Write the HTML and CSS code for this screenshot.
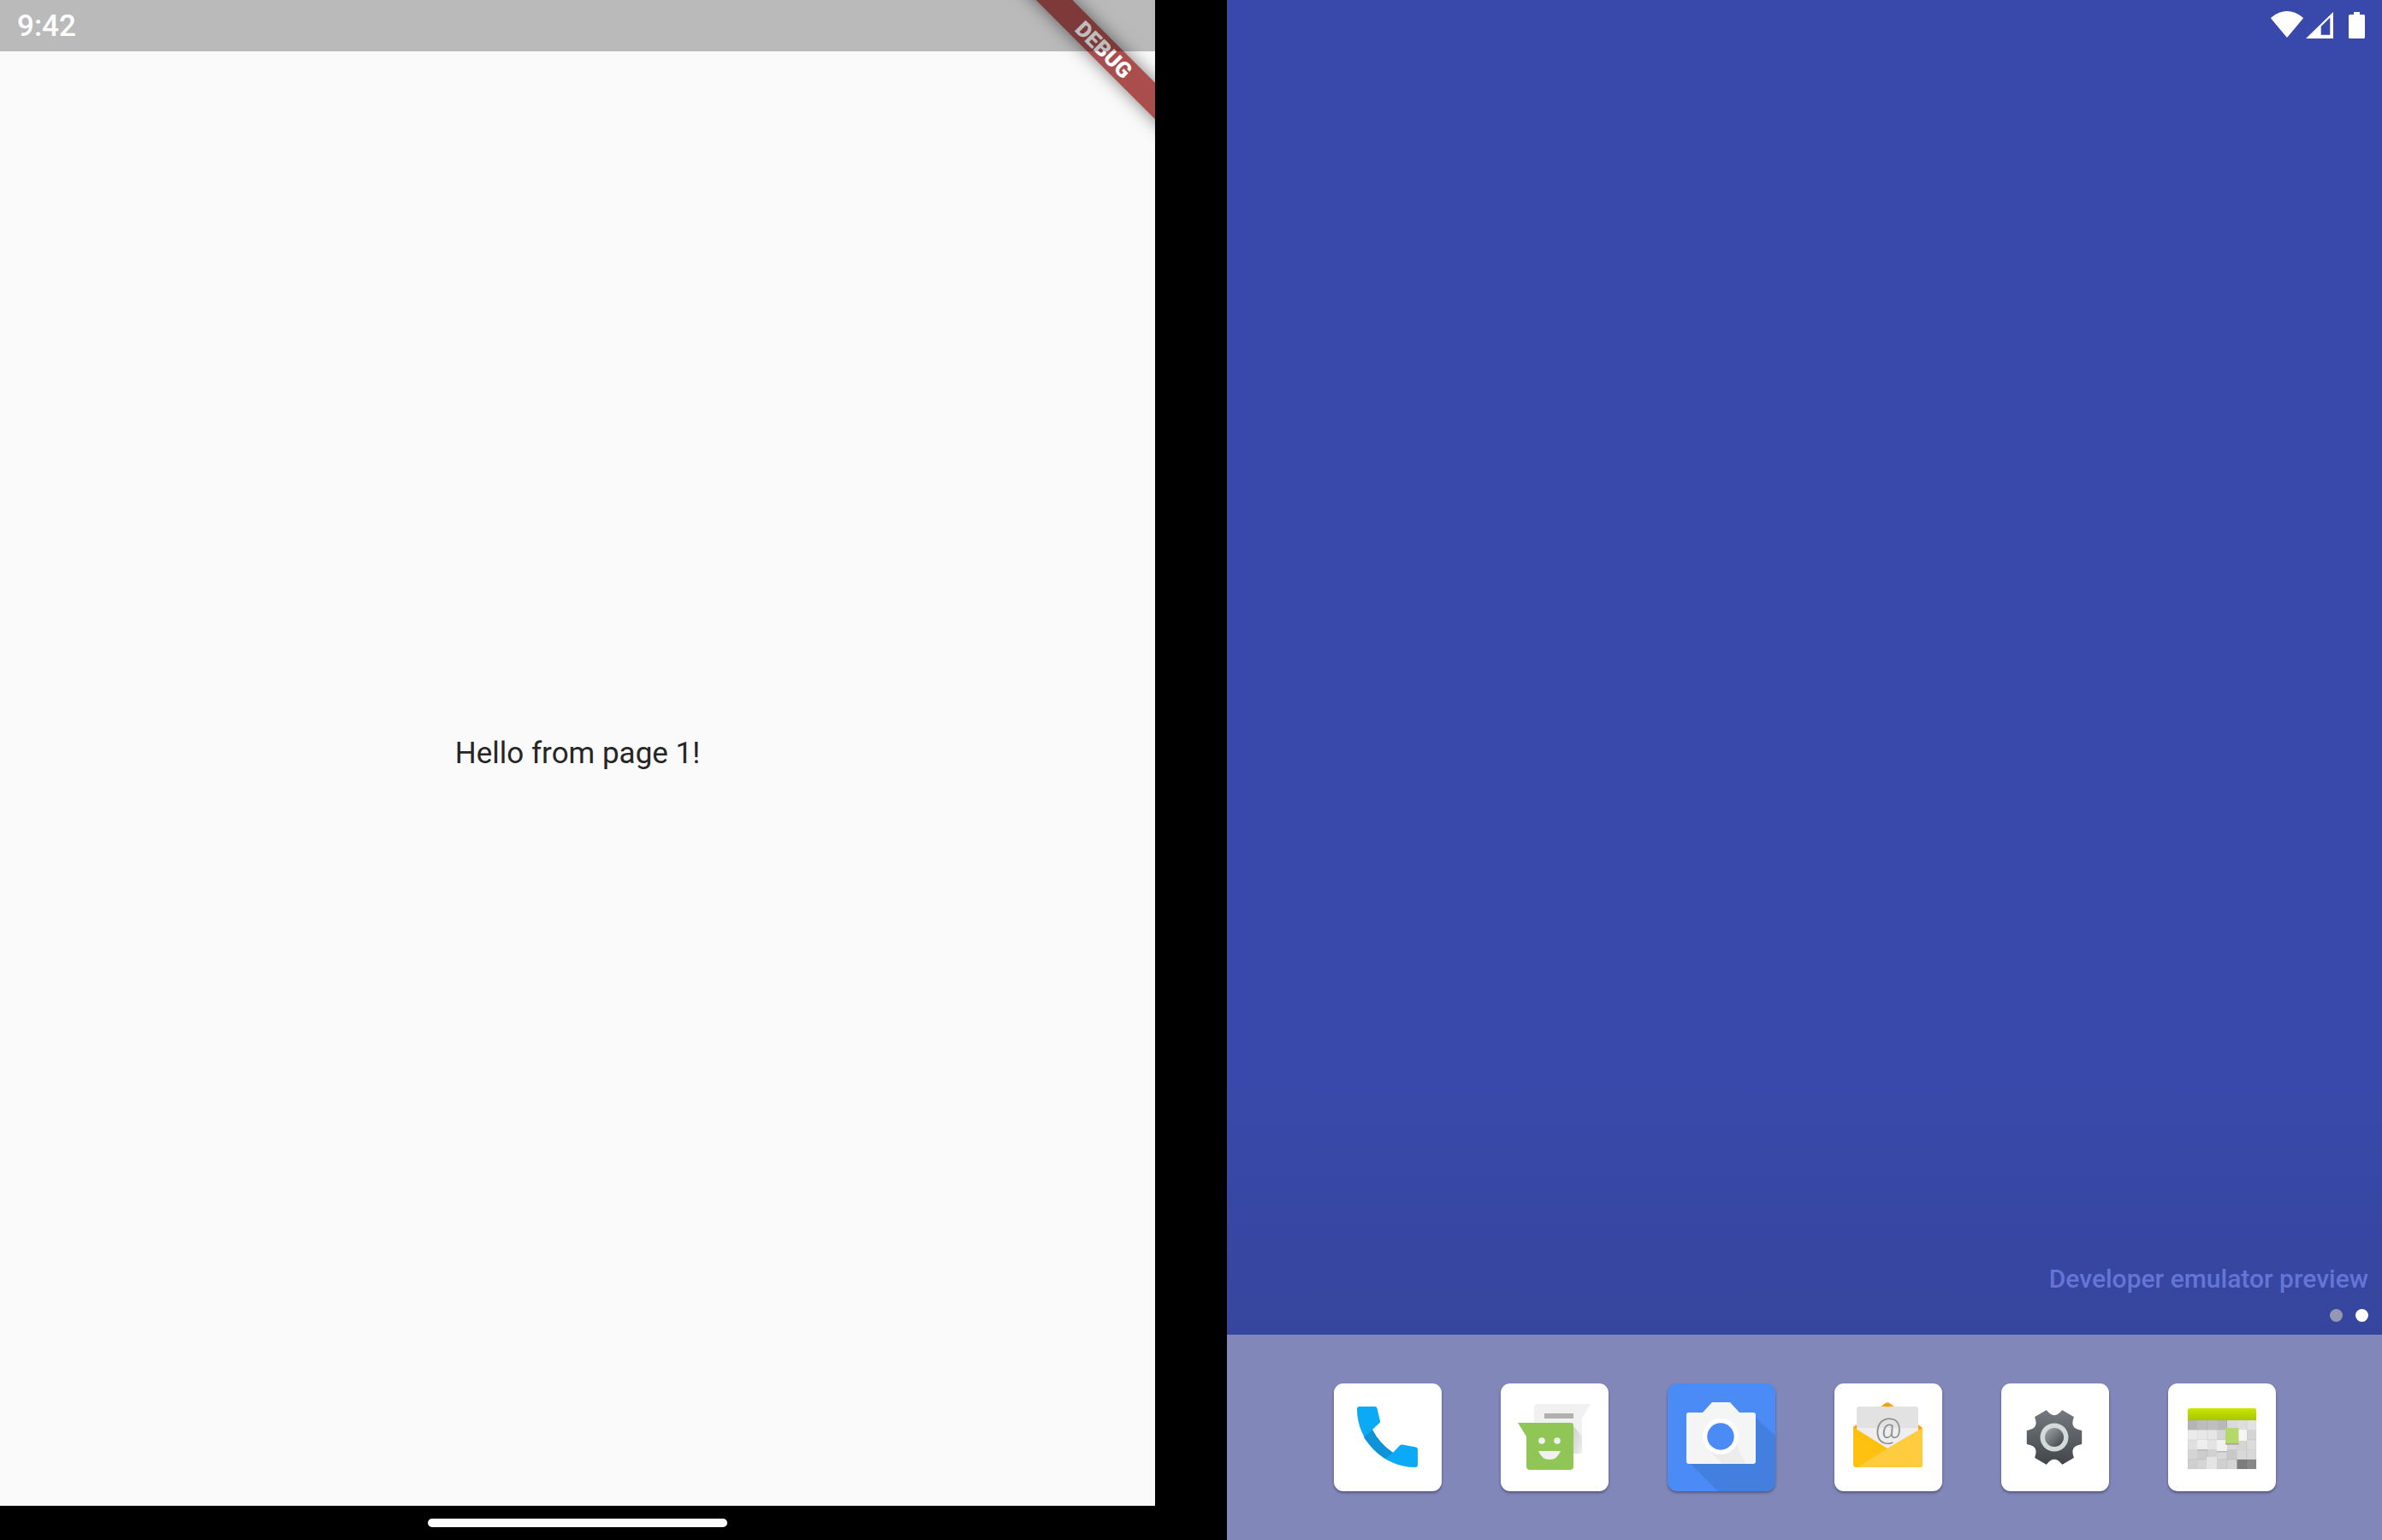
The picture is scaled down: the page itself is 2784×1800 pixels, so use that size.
FILE: index.html
```html
<!DOCTYPE html>
<html lang="en">
<head>
<meta charset="utf-8">
<title>Hello from page 1</title>
<link rel="stylesheet" href="styles.css">
</head>
<body>
<div class="screen">
  <section class="left">
    <div class="app">
      <div class="hello">Hello from page 1!</div>
      <div class="banner"><span>DEBUG</span></div>
      <div class="statusbar">9:42</div>
    </div>
    <div class="navzone"><div class="pill"></div></div>
  </section>

  <section class="right">
    <div class="wall">
      <div class="sysicons">
        <svg class="i-wifi" width="38" height="31" viewBox="0 0 38 31"><path d="M19 31 L0.6 9 Q-0.3 8 0.8 7.2 Q19 -7 37.2 7.2 Q38.3 8 37.4 9 Z" fill="#fff"/></svg>
        <svg class="i-signal" width="32" height="31" viewBox="0 0 32 31"><path fill-rule="evenodd" d="M0 31 L32 0 V31 Z M17.7 17 V26.7 H28.3 V6.5 Z" fill="#fff"/></svg>
        <svg class="i-batt" width="19" height="31" viewBox="0 0 19 31"><path d="M6 0 H13 V3 H17.5 Q19 3 19 4.5 V29.5 Q19 31 17.5 31 H1.5 Q0 31 0 29.5 V4.5 Q0 3 1.5 3 H6 Z" fill="#fff"/></svg>
      </div>
      <div class="devnote">Developer emulator preview</div>
      <div class="dots"><span class="dot dim"></span><span class="dot on"></span></div>
    </div>
    <div class="dock">
      <div class="card">
        <svg viewBox="0 0 126 126" width="126" height="126">
          <path d="M30 27 H48 Q50 27 50.5 29 L54 44 Q54.5 45 53.5 46 L45 54 Q53 70 69 81 L77 72.5 Q78.5 71 80 71.5 L96 74.5 Q98 75 98 77 V95 Q98 98 95 98 C58 98 27 67 27 30 Q27 27 30 27Z" fill="#0ba9f6"/>
          <path d="M45 54 Q53 70 69 81 L60 88 Q45 78 35 63Z" fill="#0e93d8"/>
        </svg>
      </div>
      <div class="card">
        <svg viewBox="0 0 126 126" width="126" height="126">
          <defs><linearGradient id="msgfold" x1="0" y1="0" x2="1" y2="1"><stop offset="0" stop-color="#cfcfcf"/><stop offset="1" stop-color="#eeeeee"/></linearGradient></defs>
          <path d="M43 24 H105 L95 41 V78 Q95 82 91 82 H43 Q39 82 39 78 V28 Q39 24 43 24Z" fill="#f1f1f1"/>
          <path d="M85 50 L95 62 V78 Q95 82 91 82 H85Z" fill="url(#msgfold)"/>
          <rect x="51" y="35" width="34" height="6" fill="#b0b0b0"/>
          <path d="M20 46 H82 Q85 46 85 49 V97 Q85 101 81 101 H34 Q30 101 30 97 V62 Z" fill="#8fc655"/>
          <circle cx="48" cy="67" r="3.8" fill="#f1f1f1"/>
          <circle cx="66" cy="67" r="3.8" fill="#f1f1f1"/>
          <path d="M44 79 H70 Q66 89 57 89 Q48 89 44 79Z" fill="#f1f1f1"/>
        </svg>
      </div>
      <div class="card card-cam">
        <svg viewBox="0 0 126 126" width="126" height="126">
          <path d="M27 94 L59 126 H116 Q126 126 126 116 V61 L103 40Z" fill="#437fdf"/>
          <path d="M24 34 H41 L52 22 H73 L84 34 H100 Q103 34 103 37 V91 Q103 94 100 94 H25 Q22 94 22 91 V37 Q22 34 24 34Z" fill="#f5f5f5"/>
          <path d="M47 77 L64 94 H92 Q78 74 77 47Z" fill="#ececec"/>
          <circle cx="62" cy="62" r="21" fill="#fff"/>
          <circle cx="62" cy="62" r="15.7" fill="#4a8bf5"/>
        </svg>
      </div>
      <div class="card">
        <svg viewBox="0 0 126 126" width="126" height="126">
          <path d="M22 51 L59 23.5 Q62 21 65 23.5 L103 52 V60 H22Z" fill="#ffa000"/>
          <path d="M26 30 Q26 27 29 27 H95 Q98 27 98 30 V52 H26Z" fill="#e2e2e2"/>
          <path d="M26 52 H98 V90 H26Z" fill="#eeeeee"/>
          <text class="at" x="63" y="64" text-anchor="middle">@</text>
          <path d="M22 51 L62 76 L103 52 V95 Q103 98 100 98 H25 Q22 98 22 95Z" fill="#ffc10f"/>
          <path d="M27 98 L62 76 L103 52 V95 Q103 98 100 98Z" fill="#ffcc40"/>
        </svg>
      </div>
      <div class="card">
        <svg viewBox="0 0 126 126" width="126" height="126">
          <defs>
            <linearGradient id="gearbody" x1="0" y1="0" x2="0" y2="1"><stop offset="0" stop-color="#72787d"/><stop offset="1" stop-color="#43474c"/></linearGradient>
            <linearGradient id="gearhub" x1="0" y1="0" x2="1" y2="1"><stop offset="0" stop-color="#a4a9ac"/><stop offset="1" stop-color="#3c4045"/></linearGradient>
          </defs>
          <g transform="translate(62 63)">
            <path d="M31.2 -7.2 L31.2 7.2 Q16.5 9.5 21.8 23.4 L9.4 30.6 Q0 19 -9.4 30.6 L-21.8 23.4 Q-16.5 9.5 -31.2 7.2 L-31.2 -7.2 Q-16.5 -9.5 -21.8 -23.4 L-9.4 -30.6 Q0 -19 9.4 -30.6 L21.8 -23.4 Q16.5 -9.5 31.2 -7.2Z" fill="url(#gearbody)" stroke="url(#gearbody)" stroke-width="2" stroke-linejoin="round"/>
            <circle r="16.5" fill="#d6d9d9"/>
            <circle r="11" fill="url(#gearhub)"/>
          </g>
        </svg>
      </div>
      <div class="card">
        <svg viewBox="0 0 126 126" width="126" height="126">
          <defs>
            <linearGradient id="calhead" x1="0" y1="0" x2="0" y2="1"><stop offset="0" stop-color="#cbe600"/><stop offset="1" stop-color="#a8c600"/></linearGradient>
          </defs>
          <g class="calgrid">
            <rect x="23" y="43" width="11.5" height="11.5" fill="#b4b4b4"/><rect x="34.5" y="43" width="11.5" height="11.5" fill="#bcbcbc"/><rect x="46" y="43" width="11.5" height="11.5" fill="#bfbfbf"/><rect x="57.5" y="43" width="11.5" height="11.5" fill="#b8b8b8"/><rect x="69" y="43" width="11.5" height="11.5" fill="#dadada"/><rect x="80.5" y="43" width="11.5" height="11.5" fill="#dedede"/><rect x="92" y="43" width="11" height="11.5" fill="#e2e2e2"/>
            <rect x="23" y="54.5" width="11.5" height="11.5" fill="#ebebeb"/><rect x="34.5" y="54.5" width="11.5" height="11.5" fill="#e8e8e8"/><rect x="46" y="54.5" width="11.5" height="11.5" fill="#e6e6e6"/><rect x="57.5" y="54.5" width="11.5" height="11.5" fill="#d5d5d5"/><rect x="69" y="54.5" width="11.5" height="11.5" fill="#cccccc"/><rect x="80.5" y="54.5" width="11.5" height="11.5" fill="#dddddd"/><rect x="92" y="54.5" width="11" height="11.5" fill="#d5d5d5"/>
            <rect x="23" y="66" width="11.5" height="11.5" fill="#e0e0e0"/><rect x="34.5" y="66" width="11.5" height="11.5" fill="#dedede"/><rect x="46" y="66" width="11.5" height="11.5" fill="#e4e4e4"/><rect x="57.5" y="66" width="11.5" height="11.5" fill="#d0d0d0"/><rect x="69" y="66" width="11.5" height="11.5" fill="#d8d8d8"/><rect x="80.5" y="66" width="11.5" height="11.5" fill="#d5d5d5"/><rect x="92" y="66" width="11" height="11.5" fill="#dcdcdc"/>
            <rect x="23" y="77.5" width="11.5" height="11.5" fill="#d5d5d5"/><rect x="34.5" y="77.5" width="11.5" height="11.5" fill="#cccccc"/><rect x="46" y="77.5" width="11.5" height="11.5" fill="#d2d2d2"/><rect x="57.5" y="77.5" width="11.5" height="11.5" fill="#d8d8d8"/><rect x="69" y="77.5" width="11.5" height="11.5" fill="#c8c8c8"/><rect x="80.5" y="77.5" width="11.5" height="11.5" fill="#d8d8d8"/><rect x="92" y="77.5" width="11" height="11.5" fill="#d8d8d8"/>
            <rect x="23" y="89" width="11.5" height="11" fill="#cfcfcf"/><rect x="34.5" y="89" width="11.5" height="11" fill="#d5d5d5"/><rect x="46" y="89" width="11.5" height="11" fill="#d8d8d8"/><rect x="57.5" y="89" width="11.5" height="11" fill="#d0d0d0"/><rect x="69" y="89" width="11.5" height="11" fill="#d5d5d5"/><rect x="80.5" y="89" width="11.5" height="11" fill="#7c7c7c"/><rect x="92" y="89" width="11" height="11" fill="#888888"/>
          </g>
          <path d="M23 43 V31 Q23 29 25 29 H101 Q103 29 103 31 V43Z" fill="url(#calhead)"/>
          <rect x="34" y="66" width="12" height="12" fill="#eeeeee"/>
          <rect x="34" y="77" width="12" height="1.5" fill="#b8b8b8"/>
          <rect x="57" y="66" width="12" height="13" fill="#f1f1f1"/>
          <rect x="57" y="79" width="12" height="1.5" fill="#b8b8b8"/>
          <rect x="45" y="86" width="12" height="14" fill="#e4e4e4"/>
          <rect x="82" y="54" width="10" height="13" fill="#f5f5f5"/>
          <rect x="67" y="52" width="15.5" height="18" fill="#b4d869"/>
          <rect x="67" y="70" width="15.5" height="1.5" fill="#a0a0a0"/>
        </svg>
      </div>
    </div>
  </section>
</div>
</body>
</html>
```

FILE: styles.css
```css
* { box-sizing: border-box; }

html, body {
  margin: 0;
  height: 100%;
  background: #000;
}

body {
  font-family: Roboto, "Liberation Sans", sans-serif;
  overflow: hidden;
}

.screen {
  display: flex;
  justify-content: space-between;
  width: 2784px;
  height: 1800px;
}

/* left pane */
.left {
  display: flex;
  flex-direction: column;
  width: 1350px;
}

.app {
  position: relative;
  flex: 1;
  display: flex;
  align-items: center;
  justify-content: center;
  overflow: hidden;
  background: #fafafa;
}

.hello {
  font-size: 35px;
  line-height: 41px;
  color: #262626;
}

.statusbar {
  position: absolute;
  left: 0;
  top: 0;
  width: 100%;
  height: 60px;
  padding-left: 20px;
  font-size: 35px;
  font-weight: 500;
  line-height: 61px;
  color: #fff;
  background: rgba(0, 0, 0, 0.255);
}

.banner {
  position: absolute;
  left: 1090px;
  top: 43px;
  width: 400px;
  height: 30.4px;
  display: flex;
  align-items: center;
  justify-content: center;
  transform: rotate(45deg);
  background: #aa4d4d;
  box-shadow: 0 0 20px rgba(0, 0, 0, 0.5);
  font-size: 25.5px;
  font-weight: 900;
  line-height: 30px;
  color: #fff;
}

.navzone {
  height: 40px;
  display: flex;
  align-items: center;
  justify-content: center;
}

.pill {
  width: 350px;
  height: 10px;
  border-radius: 5px;
  background: #fafafa;
}

/* right pane */
.right {
  display: flex;
  flex-direction: column;
  width: 1350px;
}

.wall {
  flex: 1;
  display: flex;
  flex-direction: column;
  align-items: flex-end;
  padding-right: 16px;
  background: linear-gradient(#3949ab 0%, #3949ab 80%, #36459d 100%);
}

.sysicons {
  display: flex;
  align-items: flex-start;
  height: 60px;
  margin-bottom: auto;
  padding-top: 14px;
  margin-right: 4px;
}

.sysicons svg { display: block; }
.i-wifi { margin-top: -1px; margin-right: 3px; }
.i-signal { margin-right: 18px; }

.devnote {
  font-size: 30px;
  font-weight: 500;
  line-height: 40px;
  color: #6475d5;
}

.dots {
  display: flex;
  gap: 15px;
  margin-top: 15px;
  margin-bottom: 15px;
}

.dot {
  width: 15px;
  height: 15px;
  border-radius: 50%;
}

.dot.dim { background: #9598b3; }
.dot.on { background: #fff; }

.dock {
  height: 240px;
  display: flex;
  align-items: flex-start;
  justify-content: center;
  gap: 69px;
  padding-top: 57px;
  background: #8187b8;
}

.card {
  width: 126px;
  height: 126px;
  border-radius: 11px;
  overflow: hidden;
  background: #fff;
  box-shadow: 0 2px 3px rgba(30, 30, 60, 0.45);
}

.card svg { display: block; }

.card-cam { background: #4a8bf5; }

.calgrid rect {
  stroke: rgba(0, 0, 0, 0.07);
  stroke-width: 0.6;
}

.at {
  font-family: Roboto, sans-serif;
  font-size: 34px;
  font-weight: 300;
  fill: #8b8b8b;
}
```
